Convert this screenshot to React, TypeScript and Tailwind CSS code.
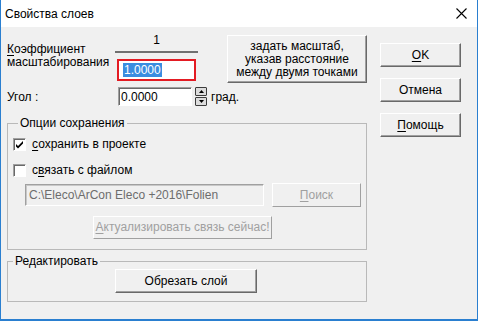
import React from "react"

const font = "font-['Liberation_Sans',Arial,sans-serif]"

function Btn({children, className = "", disabled = false}: {children: React.ReactNode; className?: string; disabled?: boolean}) {
    return (
        <div
            className={`flex items-center justify-center border bg-[#f0f0f0] text-[12px] leading-[13px] ${
                disabled
                    ? "border-t-white border-l-white border-r-[#a0a0a0] border-b-[#a0a0a0] text-[#a0a0a0]"
                    : "border-t-white border-l-white border-r-[#696969] border-b-[#696969] shadow-[inset_-1px_-1px_0_#a0a0a0] text-black"
            } ${className}`}
        >
            {children}
        </div>
    )
}

function Check({checked}: {checked: boolean}) {
    return (
        <div className="h-[13px] w-[13px] border border-t-[#a0a0a0] border-l-[#a0a0a0] border-r-white border-b-white bg-white shadow-[inset_1px_1px_0_#696969]">
            {checked && (
                <svg width="11" height="11" viewBox="0 0 11 11">
                    <path d="M2 5 L4 7 L9 2 L9 4.5 L4 9.5 L2 7.5 Z" fill="#000" />
                </svg>
            )}
        </div>
    )
}

export default function App() {
    return (
        <div className={`${font} flex h-[321px] w-[478px] flex-col border-x border-b-2 border-[#2a7fd0] bg-[#f0f0f0] text-[12px] leading-[14px] text-black`}>
            {/* title bar */}
            <div className="flex h-[27px] items-center justify-between bg-white pl-[4px] pr-[10px]">
                <span className="text-[12px]">Свойства слоев</span>
                <svg width="11" height="11" viewBox="0 0 11 11">
                    <path d="M0.5 0.5 L10.5 10.5 M10.5 0.5 L0.5 10.5" stroke="#000" strokeWidth="1.1" />
                </svg>
            </div>

            <div className="flex pl-[6px] pt-[7px]">
                {/* left column */}
                <div className="flex w-[361px] flex-col">
                    <div className="flex">
                        <div className="w-[108px] pt-[9px] leading-[13px]">
                            <div><u className="underline-offset-2">К</u>оэффициент</div>
                            <div>масштабирования</div>
                        </div>
                        <div className="flex w-[83px] flex-col items-center">
                            <div className="h-[13px] leading-[13px]">1</div>
                            <div className="mt-[4px] h-[2px] w-[83px] bg-[#707070]" />
                            <div className="mt-[6px] flex h-[22px] w-[79px] items-center border-2 border-[#e31b23] bg-white pl-[4px]">
                                <span className="bg-[#3a8de0] px-[1px] leading-[14px] text-white">1.0000</span>
                            </div>
                        </div>
                        <Btn className="ml-[29px] mt-[1px] h-[48px] w-[140px] flex-col text-center">
                            <div>задать масштаб,</div>
                            <div>указав расстояние</div>
                            <div>между двумя точками</div>
                        </Btn>
                    </div>

                    <div className="mt-[4px] flex items-center">
                        <div className="w-[111px]">Угол :</div>
                        <div className="flex h-[19px] w-[74px] items-center border border-t-[#a0a0a0] border-l-[#a0a0a0] border-r-white border-b-white bg-white pl-[2px] shadow-[inset_1px_1px_0_#696969]">
                            0.0000
                        </div>
                        <div className="ml-[3px] flex h-[19px] w-[12px] flex-col gap-[1px]">
                            <div className="flex h-[9px] items-center justify-center rounded-[1px] border border-[#3c3c3c] bg-[#dcdcdc]">
                                <svg width="5" height="3" viewBox="0 0 5 3"><path d="M0 3 L2.5 0 L5 3 Z" fill="#000" /></svg>
                            </div>
                            <div className="flex h-[9px] items-center justify-center rounded-[1px] border border-[#3c3c3c] bg-[#dcdcdc]">
                                <svg width="5" height="3" viewBox="0 0 5 3"><path d="M0 0 L2.5 3 L5 0 Z" fill="#000" /></svg>
                            </div>
                        </div>
                        <div className="ml-[4px]">град.</div>
                    </div>

                    <fieldset className="mt-[10px] w-[360px] border border-[#b9b9b9] pb-[10px] pl-[5px]">
                        <legend className="ml-[5px] px-[2px] leading-[14px]">Опции сохранения</legend>
                        <div className="mt-[7px] flex items-center">
                            <Check checked />
                            <span className="ml-[6px]"><u className="underline-offset-2">с</u>охранить в проекте</span>
                        </div>
                        <div className="mt-[12px] flex items-center">
                            <Check checked={false} />
                            <span className="ml-[6px]">с<u className="underline-offset-2">в</u>язать с файлом</span>
                        </div>
                        <div className="mt-[6px] flex items-center">
                            <div className="ml-[12px] flex h-[22px] w-[239px] items-center border border-t-[#a0a0a0] border-l-[#a0a0a0] border-r-white border-b-white bg-[#f0f0f0] pl-[3px] text-[#6d6d6d] shadow-[inset_1px_1px_0_#c8c8c8]">
                                C:\Eleco\ArCon Eleco +2016\Folien
                            </div>
                            <Btn disabled className="ml-[8px] h-[24px] w-[89px]">
                                <span><u className="underline-offset-2">П</u>оиск</span>
                            </Btn>
                        </div>
                        <Btn disabled className="ml-[80px] mt-[9px] h-[23px] w-[179px]">
                            <span><u className="underline-offset-2">А</u>ктуализировать связь сейчас!</span>
                        </Btn>
                    </fieldset>

                    <fieldset className="mt-[4px] w-[360px] border border-[#b9b9b9] pb-[8px]">
                        <legend className="ml-[5px] px-[2px] leading-[14px]">Редактировать</legend>
                        <Btn className="ml-[107px] mt-[1px] h-[24px] w-[142px]">Обрезать слой</Btn>
                    </fieldset>
                </div>

                {/* right column */}
                <div className="ml-[12px] mt-[9px] flex w-[81px] flex-col gap-[11px]">
                    <Btn className="h-[24px] w-[81px]"><span><u className="underline-offset-2">O</u>K</span></Btn>
                    <Btn className="h-[24px] w-[81px]">Отмена</Btn>
                    <Btn className="h-[24px] w-[81px]"><span><u className="underline-offset-2">П</u>омощь</span></Btn>
                </div>
            </div>
        </div>
    )
}
